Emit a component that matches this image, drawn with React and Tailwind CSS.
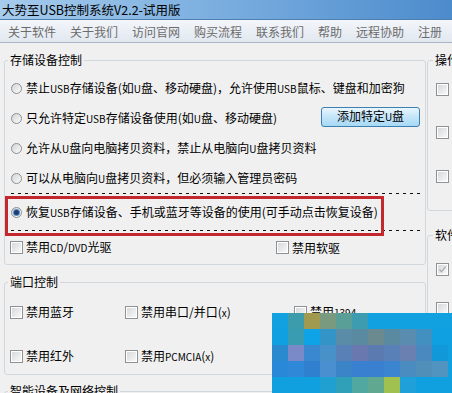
import React from 'react'

const menus = ['关于软件', '关于我们', '访问官网', '购买流程', '联系我们', '帮助', '远程协助', '注册']

const mosaic = [
  ['#11a0e0', '#3d9cac', '#a09a50', '#7a9a80', '#5a9e98', '#3e9cb0', '#11a0e0', '#11a0e0', '#11a0e0', '#11a0e0', '#11a0e0', '#11a0e0'],
  ['#0ea0e0', '#3a9cb0', '#0ea2e6', '#3394c8', '#5a8ca8', '#5a8aa0', '#6a8a90', '#5a8aa0', '#5a8cb0', '#4290c0', '#0ea0e0', '#0ea0e0'],
  ['#2a8ad0', '#7a8ac8', '#3a88d0', '#4890c8', '#5a80b8', '#6a78b0', '#5a7ab0', '#5a80b8', '#6a80b0', '#4a88c0', '#1098d8', '#10a0e0'],
  ['#2a88d8', '#3088d8', '#3080d0', '#4a90d0', '#3c84c8', '#3a80d0', '#3a80d0', '#3a84d0', '#4a8cc0', '#5090b8', '#5294c0', '#10a0e0'],
  ['#10a0e0', '#10a0e0', '#10a0e0', '#20a0d0', '#30a0b8', '#50a8a0', '#60a890', '#a0c050', '#20a0d8', '#10a0e0', '#10a0e0', '#10a0e0'],
]

// latin runs are drawn smaller, like the tahoma/simsun mix of the original
function T({ children }) {
  return children.split(/([A-Za-z0-9]+)/).map((part, i) =>
    i % 2 ? <span key={i} className="text-[10px]">{part}</span> : part
  )
}

function Radio({ checked }) {
  return (
    <span className="w-[11px] h-[11px] shrink-0 rounded-full border border-[#8c8f91] bg-gradient-to-br from-[#d2d4d6] to-[#fbfbfb] flex items-center justify-center">
      {checked && <span className="w-[5px] h-[5px] rounded-full bg-[#1c3f72] shadow-[0_0_0_1px_#5d8fc8]" />}
    </span>
  )
}

function Check({ checked }) {
  return (
    <span className="w-[13px] h-[13px] shrink-0 border border-[#8f9294] bg-white p-[1px] flex">
      <span className="flex-1 bg-gradient-to-br from-[#d7d9db] to-[#f8f8f8] flex items-center justify-center">
        {checked && (
          <svg width="9" height="9" viewBox="0 0 9 9">
            <path d="M1.5 4.5 L3.5 6.8 L7.6 1.6" fill="none" stroke="#a8abad" strokeWidth="1.3" />
          </svg>
        )}
      </span>
    </span>
  )
}

function RadioRow({ checked, children, className = '' }) {
  return (
    <div className={`flex items-center pl-[1px] ${className}`}>
      <Radio checked={checked} />
      <span className="ml-[4px]"><T>{children}</T></span>
    </div>
  )
}

function CheckItem({ children, className = '' }) {
  return (
    <div className={`flex items-center gap-[3px] ${className}`}>
      <Check />
      <span><T>{children}</T></span>
    </div>
  )
}

const dashed = 'h-px ml-[1px] mr-[4px] bg-[repeating-linear-gradient(90deg,#111_0_3px,transparent_3px_7px)]'

export default function App() {
  return (
    <div className="w-[452px] h-[393px] overflow-hidden relative bg-[#f0f0f0] text-[12px] leading-[16px] text-black font-['Noto_Sans_CJK_SC',sans-serif]">
      <div className="h-[20px] pl-[2px] text-[12.5px] leading-[20px] bg-gradient-to-r from-[#a6cbec] via-[#79addf] to-[#4c8bcc] border-b border-[#4f7fae]">
        大势至USB控制系统V2.2-试用版
      </div>

      <div className="h-[23px] flex items-center gap-[14px] pl-[8px] pt-[2px] text-[#6b6b6b] bg-gradient-to-b from-[#f3f6fa] to-[#e2e8f0] border-b border-[#a9b5c4]">
        {menus.map(m => <span key={m}>{m}</span>)}
      </div>

      <div className="flex">
        <div className="w-[427px] shrink-0">
          <fieldset className="ml-[4px] w-[422px] mt-[9px] border border-[#d0d8de] rounded-[3px] pl-[5px]">
            <legend className="ml-[-2px] px-[2px]">存储设备控制</legend>
            <div className="pt-[5px]">
              <RadioRow className="h-[30px]">禁止USB存储设备(如U盘、移动硬盘)，允许使用USB鼠标、键盘和加密狗</RadioRow>
              <div className="h-[30px] flex items-center">
                <RadioRow>只允许特定USB存储设备使用(如U盘、移动硬盘)</RadioRow>
                <button className="ml-auto mr-[5px] mb-[3px] w-[99px] h-[20px] rounded-[3px] border border-[#3c7fb1] bg-gradient-to-b from-[#eaf6fd] via-[#c4e5f9] to-[#a7d9f5] text-[12px] leading-[16px]">
                  <T>添加特定U盘</T>
                </button>
              </div>
              <RadioRow className="h-[30px]">允许从U盘向电脑拷贝资料，禁止从电脑向U盘拷贝资料</RadioRow>
              <RadioRow className="h-[30px]">可以从电脑向U盘拷贝资料，但必须输入管理员密码</RadioRow>
              <div className={dashed} />
              <RadioRow checked className="h-[36px]">恢复USB存储设备、手机或蓝牙等设备的使用(可手动点击恢复设备)</RadioRow>
              <div className={dashed} />
              <div className="h-[33px] flex items-center">
                <CheckItem className="w-[266px]">禁用CD/DVD光驱</CheckItem>
                <CheckItem>禁用软驱</CheckItem>
              </div>
            </div>
          </fieldset>

          <fieldset className="ml-[4px] w-[422px] mt-[9px] border border-[#d0d8de] rounded-[3px] pl-[5px]">
            <legend className="ml-[-2px] px-[2px]">端口控制</legend>
            <div className="h-[44px] flex items-center">
              <CheckItem className="w-[115px]">禁用蓝牙</CheckItem>
              <CheckItem className="w-[169px]">禁用串口/并口(x)</CheckItem>
              <CheckItem>禁用1394</CheckItem>
            </div>
            <div className="h-[40px] pt-[4px] flex items-center">
              <CheckItem className="w-[115px]">禁用红外</CheckItem>
              <CheckItem className="w-[169px]">禁用PCMCIA(x)</CheckItem>
            </div>
          </fieldset>

          <fieldset className="ml-[4px] w-[422px] mt-[8px] h-[40px] border border-[#d0d8de] rounded-[3px] pl-[5px]">
            <legend className="ml-[-2px] px-[2px]">智能设备及网络控制</legend>
          </fieldset>
        </div>

        <div className="w-[200px] shrink-0">
          <fieldset className="mt-[9px] border border-[#d0d8de] rounded-[3px] pl-[8px] pb-[12px]">
            <legend className="ml-[-3px] px-[2px]">操作</legend>
            <div className="h-[42px] flex items-center"><Check /></div>
            <div className="h-[44px] flex items-center"><Check /></div>
            <div className="h-[44px] flex items-center"><Check /></div>
          </fieldset>
          <fieldset className="mt-[16px] h-[200px] border border-[#d0d8de] rounded-[3px] pl-[8px] pt-[6px]">
            <legend className="ml-[-3px] px-[2px]">软件</legend>
            <div className="h-[40px] flex items-center"><Check checked /></div>
            <div className="h-[39px] flex items-center"><Check /></div>
          </fieldset>
        </div>
      </div>

      <div className="absolute left-[5px] top-[196px] w-[379px] h-[40px] border-[3px] border-[#c3282e]" />

      <div className="absolute left-[272px] top-[313px] w-[180px] h-[80px] overflow-hidden grid grid-cols-[repeat(12,16px)] auto-rows-[16px]">
        {mosaic.flat().map((c, i) => (
          <div key={i} style={{ backgroundColor: c }} />
        ))}
      </div>
    </div>
  )
}
